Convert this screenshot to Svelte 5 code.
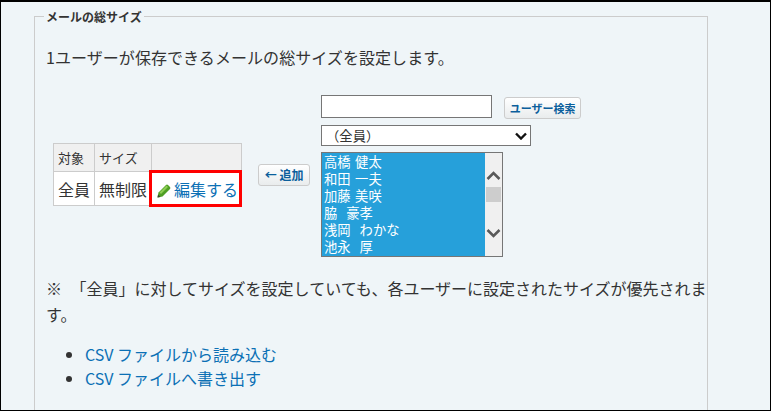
<script>
  const users = ['高橋 健太', '和田 一夫', '加藤 美咲', '脇  豪孝', '浅岡  わかな', '池永  厚'];
</script>

<div class="page">
  <fieldset class="box">
    <legend>メールの総サイズ</legend>
    <p class="lead">1ユーザーが保存できるメールの総サイズを設定します。</p>

    <div class="editor">
      <table>
        <thead>
          <tr><th>対象</th><th>サイズ</th><th></th></tr>
        </thead>
        <tbody>
          <tr>
            <td>全員</td>
            <td>無制限</td>
            <td class="edit">
              <a href="#edit">
                <svg width="14" height="14" viewBox="0 0 14 14" aria-hidden="true">
                  <path d="M0.5 13.5 L1.5 8.5 L9 1 Q10 0.2 11 1 L13 3 Q13.8 4 13 5 L5.5 12.5 Z" fill="#4f9f24" />
                  <path d="M2.5 8.5 L9.5 1.5 L11 3 L4 10 Z" fill="#8fcf55" />
                  <path d="M0.5 13.5 L1 10.5 L3.5 13 Z" fill="#3c4a2c" />
                </svg>編集する</a>
            </td>
          </tr>
        </tbody>
      </table>

      <button class="btn add">← 追加</button>

      <div class="picker">
        <div class="search">
          <input type="text" />
          <button class="btn">ユーザー検索</button>
        </div>
        <select class="group">
          <option>（全員）</option>
        </select>
        <div class="list">
          <ul>
            {#each users as user}
              <li>{user}</li>
            {/each}
          </ul>
          <div class="scrollbar">
            <svg width="17" height="17" viewBox="0 0 17 17" aria-hidden="true"><path d="M2.5 12 L8.5 6 L14.5 12" fill="none" stroke="#595959" stroke-width="2.6" /></svg>
            <div class="track"><div class="thumb"></div></div>
            <svg width="17" height="17" viewBox="0 0 17 17" aria-hidden="true"><path d="M2.5 5 L8.5 11 L14.5 5" fill="none" stroke="#595959" stroke-width="2.6" /></svg>
          </div>
        </div>
      </div>
    </div>

    <p class="note">※ 「全員」に対してサイズを設定していても、各ユーザーに設定されたサイズが優先されます。</p>

    <ul class="links">
      <li><a href="#import">CSV ファイルから読み込む</a></li>
      <li><a href="#export">CSV ファイルへ書き出す</a></li>
    </ul>
  </fieldset>
</div>

<style>
  :global(body) {
    margin: 0;
    font-family: 'Noto Sans CJK JP', sans-serif;
    color: #333;
  }

  .page {
    box-sizing: border-box;
    height: 411px;
    overflow: hidden;
    border: 1px solid #000;
    border-top-width: 2px;
    background: #eff5f8;
    padding: 8px 62px 0 33px;
  }

  .box {
    margin: 0;
    padding: 0 0 40px 11px;
    border: 1px solid #ccc;
    min-width: 0;
  }

  legend {
    margin-left: -2px;
    padding: 0 2px;
    font-size: 12px;
    font-weight: bold;
    line-height: 13px;
  }

  .lead {
    margin: 22px 0 0;
    font-size: 16px;
    line-height: 24px;
    letter-spacing: 0.06px;
  }

  .editor {
    display: flex;
    align-items: center;
    margin: 25px 0 0 7px;
  }

  table {
    border-collapse: collapse;
    font-size: 16px;
    line-height: 20px;
    background: #fff;
    margin-bottom: 2px;
  }

  th,
  td {
    border: 1px solid #ccc;
    padding: 0 4px;
    white-space: nowrap;
  }

  th {
    height: 28px;
    box-sizing: border-box;
    background: #f0f0f0;
    font-size: 13px;
    font-weight: normal;
    text-align: left;
  }

  td {
    height: 34px;
    box-sizing: border-box;
  }

  td.edit {
    position: relative;
    padding: 0 3px 0 5px;
  }

  td.edit::after {
    content: '';
    position: absolute;
    inset: -2px -1px -2px -3px;
    border: 3px solid #f00;
  }

  a {
    color: #0b70b5;
    text-decoration: none;
  }

  .edit svg {
    vertical-align: -2px;
    margin-right: 3px;
  }

  .btn {
    box-sizing: border-box;
    height: 22px;
    padding: 0 5px;
    border: 1px solid #ccc;
    border-radius: 3px;
    background: linear-gradient(#fff, #e9eced);
    color: #0b5f9c;
    font-family: inherit;
    font-size: 12px;
    font-weight: bold;
    white-space: nowrap;
  }

  .add {
    width: 52px;
    padding: 0;
    margin: 0 11px 2px 16px;
  }

  .picker {
    display: flex;
    flex-direction: column;
  }

  .search {
    display: flex;
    align-items: center;
    gap: 12px;
  }

  input {
    box-sizing: border-box;
    width: 171px;
    height: 23px;
    border: 1px solid #767676;
    background: #fff;
  }

  .search .btn {
    margin-top: 3px;
    width: 77px;
    padding: 0;
    font-size: 11px;
  }

  .group {
    box-sizing: border-box;
    width: 210px;
    height: 21px;
    margin-top: 6px;
    padding-left: 4px;
    appearance: none;
    border: 1px solid #767676;
    border-radius: 0;
    background: #fff url("data:image/svg+xml,%3Csvg xmlns='http://www.w3.org/2000/svg' width='12' height='8'%3E%3Cpath d='M1 1.5 L6 6.5 L11 1.5' fill='none' stroke='%23111' stroke-width='2.4'/%3E%3C/svg%3E") no-repeat right 3px center;
    color: #333;
    font-family: inherit;
    font-size: 13.3px;
  }

  .list {
    box-sizing: border-box;
    display: flex;
    width: 182px;
    height: 105px;
    margin-top: 6px;
    border: 1px solid #767676;
    background: #f0f0f0;
    overflow: hidden;
  }

  .list ul {
    flex: 1;
    margin: 0;
    padding: 0 2px;
    list-style: none;
    background: #26a0da;
    color: #fff;
    font-size: 13.3px;
    line-height: 17px;
    white-space: pre;
    word-spacing: 1.5px;
  }

  .scrollbar {
    width: 17px;
    display: flex;
    flex-direction: column;
    flex: none;
    padding: 14px 0;
    box-sizing: border-box;
  }

  .track {
    flex: 1;
    padding-top: 3px;
  }

  .thumb {
    height: 15px;
    margin: 0 1px;
    background: #cdcdcd;
  }

  .note {
    margin: 18px -4px 0 0;
    font-size: 16px;
    line-height: 26px;
    word-spacing: 5px;
  }

  .links {
    margin: 15px 0 0;
    padding: 0 0 0 39px;
    font-size: 16px;
    line-height: 24px;
  }
</style>
